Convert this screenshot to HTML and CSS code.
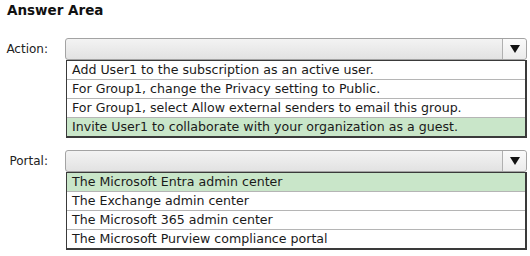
FILE: index.html
```html
<html>
  <head>
    <title>Answer Area</title>
    <meta charset="UTF-8" />
    <link rel="stylesheet" href="styles.css">
  </head>
  <body>
    <div id="title">Answer Area</div>

    <div class="field first">
      <label class="field-label">Action:</label>
      <div class="field-control">
        <div class="combo">
          <div class="combo-value"></div>
          <div class="combo-arrow"><span class="triangle"></span></div>
        </div>
        <ul class="options">
          <li>Add User1 to the subscription as an active user.</li>
          <li>For Group1, change the Privacy setting to Public.</li>
          <li>For Group1, select Allow external senders to email this group.</li>
          <li class="picked">Invite User1 to collaborate with your organization as a guest.</li>
        </ul>
      </div>
    </div>

    <div class="field">
      <label class="field-label">Portal:</label>
      <div class="field-control">
        <div class="combo">
          <div class="combo-value"></div>
          <div class="combo-arrow"><span class="triangle"></span></div>
        </div>
        <ul class="options">
          <li class="picked">The Microsoft Entra admin center</li>
          <li>The Exchange admin center</li>
          <li>The Microsoft 365 admin center</li>
          <li>The Microsoft Purview compliance portal</li>
        </ul>
      </div>
    </div>
  </body>
</html>
```

FILE: styles.css
```css
body {
  margin: 0;
  background-color: #ffffff;
  font-family: "DejaVu Sans", Verdana, sans-serif;
  color: #1a1a1a;
}

#title {
  font-weight: bold;
  font-size: 13.5px;
  line-height: 18px;
  padding: 1px 0 0 7px;
  color: #111;
}

.field {
  display: grid;
  grid-template-columns: 48px 462px;
  column-gap: 17px;
  margin-top: 12px;
}

.field.first {
  margin-top: 19px;
}

.field-label {
  font-size: 12px;
  line-height: 22px;
  text-align: right;
  color: #222;
}

.combo {
  display: flex;
  height: 20px;
  border: 1px solid #a3a3a3;
  border-radius: 3px;
  background: linear-gradient(#f3f3f3, #e2e2e2);
}

.combo-value {
  flex: 1;
}

.combo-arrow {
  width: 23px;
  display: flex;
  align-items: center;
  justify-content: center;
  border-left: 1px solid #b0b0b0;
  border-radius: 0 3px 3px 0;
  background: linear-gradient(#fafafa, #ebebeb);
}

.triangle {
  width: 0;
  height: 0;
  border-left: 5px solid transparent;
  border-right: 5px solid transparent;
  border-top: 8px solid #111;
}

.options {
  list-style: none;
  margin: 0 0 0 1px;
  padding: 0;
  border: 1px solid #3a3a3a;
  border-right-width: 2px;
  border-bottom-width: 2px;
  font-size: 12.6px;
}

.options li {
  height: 18px;
  line-height: 18px;
  padding-left: 5px;
  border-bottom: 1px solid #b5b5b5;
  white-space: nowrap;
}

.options li:last-child {
  border-bottom: none;
}

.options li.picked {
  background-color: #c9e6c9;
}
```
